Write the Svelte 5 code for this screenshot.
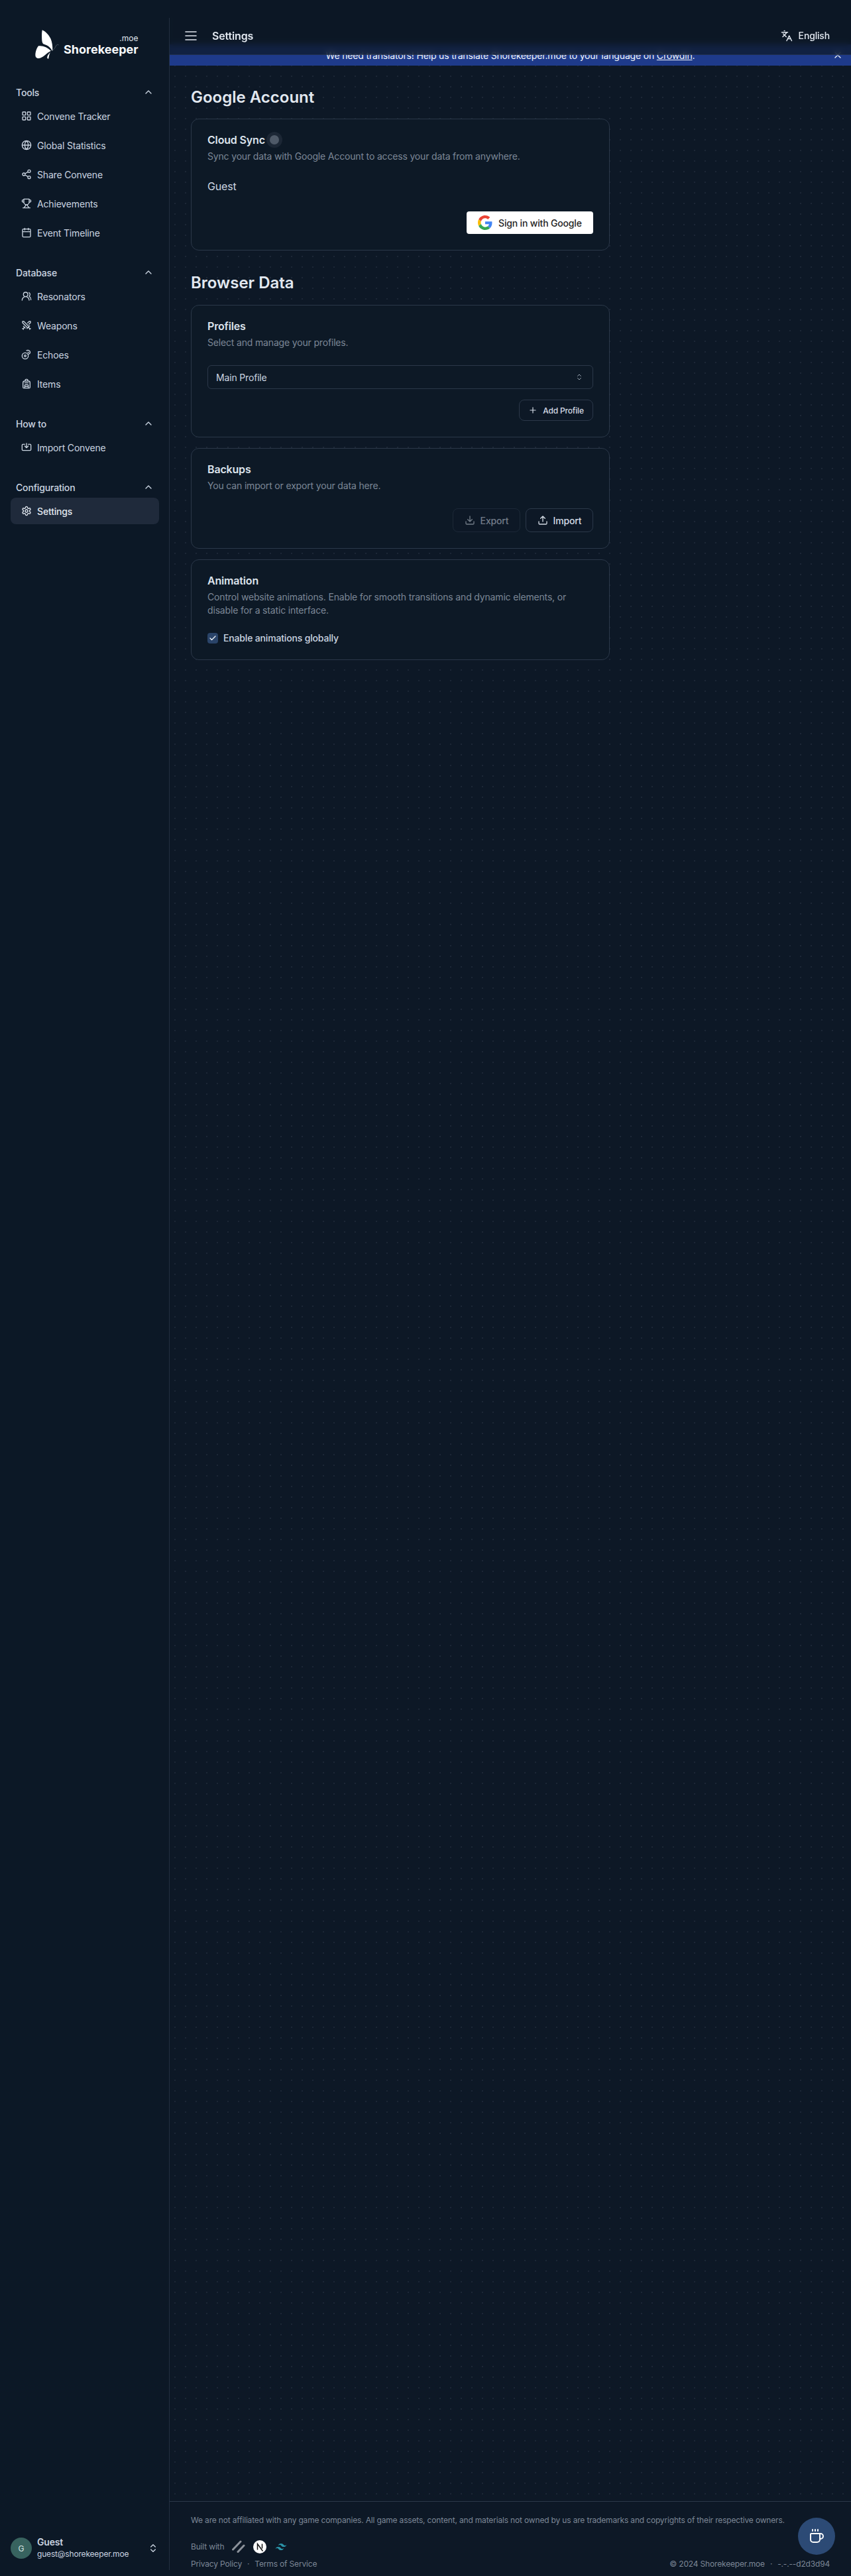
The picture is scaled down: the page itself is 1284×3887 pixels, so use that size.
<script>
	const circle = (x, y, r) => `M${x - r} ${y}a${r} ${r} 0 1 0 ${r * 2} 0a${r} ${r} 0 1 0 ${-r * 2} 0`;
	const rect = (x, y, w, h, r) =>
		`M${x + r} ${y}h${w - 2 * r}a${r} ${r} 0 0 1 ${r} ${r}v${h - 2 * r}a${r} ${r} 0 0 1 ${-r} ${r}h${-(w - 2 * r)}a${r} ${r} 0 0 1 ${-r} ${-r}v${-(h - 2 * r)}a${r} ${r} 0 0 1 ${r} ${-r}z`;

	const icons = {
		grid: rect(3, 3, 7, 7, 1) + rect(14, 3, 7, 7, 1) + rect(14, 14, 7, 7, 1) + rect(3, 14, 7, 7, 1),
		globe: circle(12, 12, 10) + 'M12 2a14.5 14.5 0 0 0 0 20 14.5 14.5 0 0 0 0-20M2 12h20',
		share: circle(18, 5, 3) + circle(6, 12, 3) + circle(18, 19, 3) + 'M8.59 13.51 15.42 17.49M15.41 6.51 8.59 10.49',
		trophy:
			'M6 9H4.5a2.5 2.5 0 0 1 0-5H6M18 9h1.5a2.5 2.5 0 0 0 0-5H18M4 22h16M10 14.66V17c0 .55-.47.98-.97 1.21C7.85 18.75 7 20.24 7 22M14 14.66V17c0 .55.47.98.97 1.21C16.15 18.75 17 20.24 17 22M18 2H6v7a6 6 0 0 0 12 0V2Z',
		calendar: 'M8 2v4M16 2v4M3 10h18' + rect(3, 4, 18, 18, 2),
		users: 'M18 21a8 8 0 0 0-16 0M22 20c0-3.37-2-6.5-4-8a5 5 0 0 0-.45-8.3' + circle(10, 8, 5),
		swords:
			'M14.5 17.5 3 6V3h3l11.5 11.5M13 19l6-6M16 16l4 4M19 21l2-2M14.5 6.5 18 3h3v3l-3.5 3.5M5 14l4 4M7 17l-3 3M3 19l2 2',
		echo: circle(9, 15, 7) + circle(9, 15, 2) + 'M12 3c3-1.5 7-.5 8 2.5s-1 5-4 5.5M15 7h2',
		backpack:
			'M4 10a4 4 0 0 1 4-4h8a4 4 0 0 1 4 4v10a2 2 0 0 1-2 2H6a2 2 0 0 1-2-2zM8 10h8M8 18h8M8 22v-6a2 2 0 0 1 2-2h4a2 2 0 0 1 2 2v6M9 6V4a2 2 0 0 1 2-2h2a2 2 0 0 1 2 2v2',
		import: 'M8 5H4a2 2 0 0 0-2 2v10a2 2 0 0 0 2 2h16a2 2 0 0 0 2-2V7a2 2 0 0 0-2-2h-4M12 3v10M8 9l4 4 4-4',
		settings:
			'M12.22 2h-.44a2 2 0 0 0-2 2v.18a2 2 0 0 1-1 1.73l-.43.25a2 2 0 0 1-2 0l-.15-.08a2 2 0 0 0-2.73.73l-.22.38a2 2 0 0 0 .73 2.73l.15.1a2 2 0 0 1 1 1.72v.51a2 2 0 0 1-1 1.74l-.15.09a2 2 0 0 0-.73 2.73l.22.38a2 2 0 0 0 2.73.73l.15-.08a2 2 0 0 1 2 0l.43.25a2 2 0 0 1 1 1.73V20a2 2 0 0 0 2 2h.44a2 2 0 0 0 2-2v-.18a2 2 0 0 1 1-1.73l.43-.25a2 2 0 0 1 2 0l.15.08a2 2 0 0 0 2.73-.73l.22-.39a2 2 0 0 0-.73-2.73l-.15-.08a2 2 0 0 1-1-1.74v-.5a2 2 0 0 1 1-1.74l.15-.09a2 2 0 0 0 .73-2.73l-.22-.38a2 2 0 0 0-2.73-.73l-.15.08a2 2 0 0 1-2 0l-.43-.25a2 2 0 0 1-1-1.73V4a2 2 0 0 0-2-2z' +
			circle(12, 12, 3),
		languages: 'M5 8l6 6M4 14l6-6 2-3M2 5h12M7 2h1M22 22l-5-10-5 10M14 18h6',
		menu: 'M4 6h16M4 12h16M4 18h16',
		updown: 'M7 15l5 5 5-5M7 9l5-5 5 5',
		up: 'M18 15l-6-6-6 6',
		plus: 'M5 12h14M12 5v14',
		x: 'M18 6 6 18M6 6l12 12',
		upload: 'M21 15v4a2 2 0 0 1-2 2H5a2 2 0 0 1-2-2v-4M17 8l-5-5-5 5M12 3v12',
		download: 'M21 15v4a2 2 0 0 1-2 2H5a2 2 0 0 1-2-2v-4M7 10l5 5 5-5M12 15V3',
		coffee:
			'M10 2v2M14 2v2M6 2v2M16 8a1 1 0 0 1 1 1v8a4 4 0 0 1-4 4H7a4 4 0 0 1-4-4V9a1 1 0 0 1 1-1h14a4 4 0 1 1 0 8h-1',
		check: 'M20 6 9 17l-5-5'
	};

	const nav = [
		{
			label: 'Tools',
			items: [
				['grid', 'Convene Tracker'],
				['globe', 'Global Statistics'],
				['share', 'Share Convene'],
				['trophy', 'Achievements'],
				['calendar', 'Event Timeline']
			]
		},
		{
			label: 'Database',
			items: [
				['users', 'Resonators'],
				['swords', 'Weapons'],
				['echo', 'Echoes'],
				['backpack', 'Items']
			]
		},
		{ label: 'How to', items: [['import', 'Import Convene']] },
		{ label: 'Configuration', items: [['settings', 'Settings']] }
	];
</script>

{#snippet icon(name, size = 16, width = 2)}
	<svg
		xmlns="http://www.w3.org/2000/svg"
		width={size}
		height={size}
		viewBox="0 0 24 24"
		fill="none"
		stroke="currentColor"
		stroke-width={width}
		stroke-linecap="round"
		stroke-linejoin="round"
	>
		<path d={icons[name]} />
	</svg>
{/snippet}

<div class="page">
	<aside class="sidebar">
		<div class="brand">
			<svg class="butterfly" width="37" height="46" viewBox="66 58 110 136">
				<path
					fill="#fff"
					d="M101 61c14 6 30 22 38 40 6 15 9 33 8 52l-2 2c-5-14-20-26-36-30-5-1-8-6-9-14-1-18-2-38 1-50z"
				/>
				<path
					fill="#fff"
					d="M84 133c18-3 42 6 56 22l-14 8c-8 7-22 20-37 25-8 2-16-2-18-8-3-10 2-34 13-47z"
				/>
				<path fill="#fff" d="M137 161c-7 7-14 16-14 24 0 3 2 6 6 6 2-8 2-18 8-30z" />
				<path fill="none" stroke="#9aa4b0" stroke-width="1.2" d="M148 152c8-4 10-12 15-20 3-5 9-7 12-3" />
			</svg>
			<div class="wordmark">
				<span class="moe">.moe</span>
				<span class="name">Shorekeeper</span>
			</div>
		</div>

		<nav>
			{#each nav as group}
				<section class="group">
					<div class="group-label">
						<span>{group.label}</span>
						{@render icon('up', 16)}
					</div>
					{#each group.items as [name, label]}
						<div class="nav-item" class:active={label === 'Settings'}>
							{@render icon(name)}
							<span>{label}</span>
						</div>
					{/each}
				</section>
			{/each}
		</nav>

		<div class="user">
			<div class="avatar">G</div>
			<div class="user-text">
				<span class="user-name">Guest</span>
				<span class="user-mail">guest@shorekeeper.moe</span>
			</div>
			{@render icon('updown', 16)}
		</div>
	</aside>

	<div class="main">
		<header class="topbar">
			<div class="topbar-left">
				{@render icon('menu', 24, 1.6)}
				<span class="page-title">Settings</span>
			</div>
			<div class="lang">
				{@render icon('languages', 18)}
				<span>English</span>
			</div>
		</header>

		<div class="banner">
			<span>We need translators! Help us translate Shorekeeper.moe to your language on <u>Crowdin</u>.</span>
			<div class="banner-close">{@render icon('x', 16)}</div>
		</div>

		<main class="content">
			<h2>Google Account</h2>
			<div class="card">
				<h3 class="with-info">Cloud Sync <span class="info"></span></h3>
				<p class="muted">Sync your data with Google Account to access your data from anywhere.</p>
				<p class="guest">Guest</p>
				<div class="actions google-row">
					<button class="google">
						<svg width="22" height="22" viewBox="0 0 48 48">
							<path fill="#EA4335" d="M24 9.5c3.5 0 6.700 1.200 9.200 3.600l6.900-6.900C35.900 2.400 30.400 0 24 0 14.600 0 6.500 5.400 2.600 13.200l8 6.200C12.500 13.700 17.800 9.500 24 9.500z" />
							<path fill="#4285F4" d="M46.900 24.500c0-1.600-.1-3.100-.4-4.500H24v9h12.900c-.6 3-2.200 5.500-4.700 7.200l7.700 6c4.500-4.200 7-10.300 7-17.700z" />
							<path fill="#FBBC05" d="M10.500 28.600c-.5-1.400-.8-3-.8-4.600s.3-3.200.8-4.600l-8-6.200C.9 16.500 0 20.100 0 24s.9 7.500 2.600 10.800l7.900-6.200z" />
							<path fill="#34A853" d="M24 48c6.500 0 11.900-2.100 15.900-5.800l-7.700-6c-2.200 1.400-5 2.300-8.200 2.300-6.200 0-11.500-4.200-13.400-9.900l-8 6.200C6.500 42.600 14.600 48 24 48z" />
						</svg>
						<span>Sign in with Google</span>
					</button>
				</div>
			</div>

			<h2 class="second">Browser Data</h2>
			<div class="stack">
				<div class="card">
					<h3>Profiles</h3>
					<p class="muted">Select and manage your profiles.</p>
					<div class="select">
						<span>Main Profile</span>
						{@render icon('updown', 12, 1.5)}
					</div>
					<div class="actions add-row">
						<button class="outline small">
							{@render icon('plus', 14)}
							<span>Add Profile</span>
						</button>
					</div>
				</div>

				<div class="card">
					<h3>Backups</h3>
					<p class="muted">You can import or export your data here.</p>
					<div class="actions backup-row">
						<button class="outline disabled">
							{@render icon('download', 16)}
							<span>Export</span>
						</button>
						<button class="outline">
							{@render icon('upload', 16)}
							<span>Import</span>
						</button>
					</div>
				</div>

				<div class="card">
					<h3>Animation</h3>
					<p class="muted">
						Control website animations. Enable for smooth transitions and dynamic elements, or disable for a static
						interface.
					</p>
					<div class="toggle">
						<span class="checkbox">{@render icon('check', 12, 2.5)}</span>
						<span>Enable animations globally</span>
					</div>
				</div>
			</div>
		</main>

		<footer class="footer">
			<p>We are not affiliated with any game companies. All game assets, content, and materials not owned by us are trademarks and copyrights of their respective owners.</p>
			<div class="built">
				<span>Built with</span>
				<svg class="slashes" width="20" height="20" viewBox="0 0 20 20">
					<path d="M1.500 14 13 2M9 17.500 18 8" stroke="#8b919a" stroke-width="3" stroke-linecap="round" fill="none" />
				</svg>
				<svg width="20" height="20" viewBox="0 0 20 20">
					<circle cx="10" cy="10" r="10" fill="#fff" />
					<path d="M6.500 14.500v-9l8 11M13.500 5.500v7" stroke="#111" stroke-width="1.500" fill="none" />
				</svg>
				<svg width="20" height="20" viewBox="0 0 24 24">
					<path
						fill="#2b93a8"
						d="M12 6c-2.700 0-4.300 1.300-5 4 1-1.300 2.200-1.800 3.500-1.500.8.200 1.300.7 1.900 1.300 1 1 2.100 2.200 4.600 2.200 2.700 0 4.300-1.300 5-4-1 1.300-2.200 1.800-3.500 1.500-.8-.2-1.300-.7-1.900-1.300C15.600 7.200 14.500 6 12 6zM7 12c-2.700 0-4.300 1.300-5 4 1-1.300 2.200-1.800 3.500-1.500.8.200 1.300.7 1.900 1.300 1 1 2.100 2.200 4.600 2.200 2.700 0 4.300-1.300 5-4-1 1.300-2.200 1.800-3.500 1.500-.8-.2-1.300-.7-1.900-1.300C10.600 13.200 9.500 12 7 12z"
					/>
				</svg>
			</div>
			<div class="legal">
				<div class="legal-links">
					<span>Privacy Policy</span>
					<span class="dot">·</span>
					<span>Terms of Service</span>
				</div>
				<div class="legal-links">
					<span>© 2024 Shorekeeper.moe</span>
					<span class="dot">·</span>
					<span>-.-.--d2d3d94</span>
				</div>
			</div>
		</footer>
	</div>

	<button class="fab">{@render icon('coffee', 24)}</button>
</div>

<style>
	:global(body) {
		margin: 0;
		background: #0d1826;
	}

	.page {
		position: relative;
		display: grid;
		grid-template-columns: 256px 1fr;
		height: 3887px;
		overflow: hidden;
		color: #e2e8f0;
		font-family: Inter, 'Liberation Sans', sans-serif;
		font-size: 14px;
		letter-spacing: -0.012em;
	}

	/* sidebar */
	.sidebar {
		position: relative;
		display: flex;
		flex-direction: column;
		background: #0c1826;
	}

	.sidebar::after {
		content: '';
		position: absolute;
		top: 27px;
		bottom: 9px;
		right: 0;
		width: 1px;
		background: #222f40;
	}

	.brand {
		display: flex;
		align-items: flex-start;
		gap: 7px;
		height: 91px;
		padding: 44px 0 0 52px;
		box-sizing: border-box;
	}

	.butterfly {
		flex: none;
	}

	.wordmark {
		display: flex;
		flex-direction: column;
		align-items: flex-end;
		margin-top: 7px;
		line-height: 1;
		letter-spacing: 0;
	}

	.moe {
		font-size: 12px;
		line-height: 14px;
		color: #e2e8f0;
	}

	.name {
		font-size: 18px;
		line-height: 20px;
		font-weight: 700;
		color: #f8fafc;
	}

	nav {
		flex: 1;
		padding: 36px 16px 0;
	}

	.group {
		margin-bottom: 28px;
	}

	.group-label {
		display: flex;
		align-items: center;
		justify-content: space-between;
		height: 24px;
		padding: 0 8px;
		margin-bottom: 4px;
		color: #cbd5e1;
		font-weight: 500;
	}

	.nav-item {
		display: flex;
		align-items: center;
		gap: 8px;
		height: 40px;
		margin-bottom: 4px;
		padding: 0 16px;
		border-radius: 8px;
		color: #cbd5e1;
	}

	.nav-item.active {
		background: #1f2a3b;
		color: #e2e8f0;
		font-weight: 500;
	}

	.user {
		display: flex;
		align-items: center;
		gap: 8px;
		padding: 0 17px 24px 16px;
		color: #cbd5e1;
	}

	.avatar {
		display: grid;
		place-items: center;
		width: 32px;
		height: 32px;
		border-radius: 50%;
		background: #38635f;
		color: #d5e3e1;
		font-size: 12px;
		flex: none;
	}

	.user-text {
		flex: 1;
		display: flex;
		flex-direction: column;
	}

	.user-name {
		font-weight: 600;
		line-height: 18px;
	}

	.user-mail {
		font-size: 12px;
		line-height: 18px;
	}

	/* main column */
	.main {
		display: flex;
		flex-direction: column;
		min-width: 0;
		background: #0d1826;
	}

	.topbar {
		position: relative;
		z-index: 2;
		display: flex;
		align-items: center;
		justify-content: space-between;
		height: 83px;
		padding: 25px 32px 0 20px;
		box-sizing: border-box;
		border-bottom: 1px solid rgba(226, 232, 240, 0.08);
		background: rgba(13, 24, 38, 0.72);
		backdrop-filter: blur(4px);
		color: #e2e8f0;
	}

	.topbar-left {
		display: flex;
		align-items: center;
		gap: 20px;
	}

	.page-title {
		font-size: 16px;
		font-weight: 600;
	}

	.lang {
		display: flex;
		align-items: center;
		gap: 9px;
		font-weight: 500;
	}

	.banner {
		position: relative;
		display: flex;
		align-items: center;
		justify-content: center;
		height: 32px;
		margin-top: -16px;
		background: #1e3a8a;
		color: #f1f5f9;
	}

	.banner-close {
		position: absolute;
		right: 12px;
		top: 8px;
		display: flex;
	}

	.content {
		flex: 1;
		padding: 32px 0 0 32px;
		background-image: radial-gradient(circle at 8px 8px, rgba(148, 163, 184, 0.11) 0.8px, transparent 1px);
		background-size: 16px 16px;
		background-position: 0 8px;
	}

	h2 {
		margin: 0 0 16px;
		font-size: 24px;
		line-height: 32px;
		font-weight: 600;
		letter-spacing: 0;
		color: #e2e8f0;
	}

	h2.second {
		margin: 33px 0 17px;
	}

	.stack {
		display: flex;
		flex-direction: column;
		gap: 16px;
	}

	.card {
		width: 632px;
		box-sizing: border-box;
		padding: 24px;
		border: 1px solid #2b3849;
		border-radius: 12px;
		background: #0d1926;
	}

	h3 {
		margin: 0;
		font-size: 16px;
		line-height: 14px;
		font-weight: 600;
		color: #dde4ed;
	}

	.with-info {
		display: flex;
		align-items: center;
		gap: 7px;
	}

	.info {
		width: 14px;
		height: 14px;
		border-radius: 50%;
		background: #4f5a68;
		box-shadow: 0 0 0 5px #1c2735;
	}

	.muted {
		margin: 8px 0 0;
		line-height: 20px;
		color: #7c8796;
	}

	.guest {
		margin: 23px 0 0;
		font-size: 16px;
		line-height: 24px;
		color: #cbd5e1;
	}

	.actions {
		display: flex;
		justify-content: flex-end;
		gap: 8px;
	}

	.google-row {
		margin-top: 26px;
	}

	.add-row {
		margin-top: 16px;
	}

	.backup-row {
		margin-top: 24px;
	}

	button {
		display: flex;
		align-items: center;
		font: inherit;
		letter-spacing: inherit;
		cursor: pointer;
	}

	.google {
		gap: 9px;
		width: 191px;
		height: 34px;
		padding: 0 0 0 17px;
		border: 0;
		border-radius: 4px;
		background: #fff;
		color: #1f1f1f;
		font-weight: 500;
	}

	.outline {
		justify-content: center;
		gap: 8px;
		width: 102px;
		height: 36px;
		padding: 0;
		border: 1px solid #2b3849;
		border-radius: 8px;
		background: #0d1826;
		color: #d5dce6;
		font-weight: 500;
	}

	.outline.small {
		width: 112px;
		height: 32px;
		font-size: 12px;
	}

	.outline.disabled {
		opacity: 0.5;
	}

	.select {
		display: flex;
		align-items: center;
		justify-content: space-between;
		height: 36px;
		margin-top: 24px;
		padding: 0 14px 0 12px;
		box-sizing: border-box;
		border: 1px solid #2b3849;
		border-radius: 6px;
		color: #cbd5e1;
	}

	.toggle {
		display: flex;
		align-items: center;
		gap: 8px;
		margin-top: 24px;
		line-height: 16px;
		font-weight: 500;
		color: #cbd5e1;
	}

	.checkbox {
		display: grid;
		place-items: center;
		width: 16px;
		height: 16px;
		border-radius: 4px;
		background: #2a4469;
		color: #f1f5f9;
	}

	.footer {
		height: 113px;
		box-sizing: border-box;
		padding: 20px 32px 0;
		border-top: 1px solid #2b3849;
		font-size: 12px;
		line-height: 16px;
		color: #7c8796;
	}

	.footer p {
		margin: 0;
	}

	.built {
		display: flex;
		align-items: center;
		gap: 12px;
		margin-top: 22px;
	}

	.legal {
		display: flex;
		justify-content: space-between;
		margin-top: 8px;
	}

	.legal-links {
		display: flex;
		gap: 8px;
	}

	.fab {
		position: absolute;
		left: 1204px;
		top: 3799px;
		display: grid;
		place-items: center;
		width: 56px;
		height: 56px;
		padding: 0;
		border: 0;
		border-radius: 50%;
		background: #2c4a75;
		color: #f8fafc;
	}
</style>
